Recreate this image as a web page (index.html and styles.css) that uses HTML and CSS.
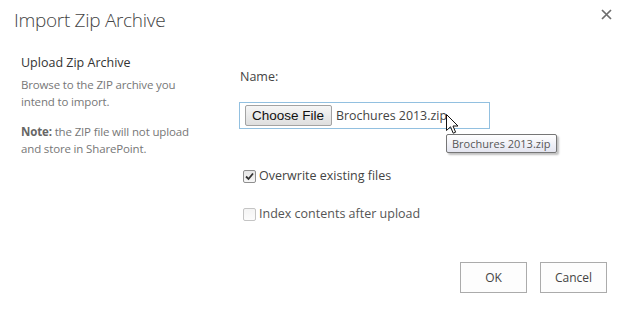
FILE: index.html
```html
<!DOCTYPE html>
<html>
<head>
<meta charset="utf-8">
<link rel="stylesheet" href="styles.css">
</head>
<body>
<div class="dialog">
  <header class="dlg-head">
    <h1 class="dlg-title">Import Zip Archive</h1>
    <button class="close" aria-label="Close">
      <svg width="11" height="11" viewBox="0 0 11 11"><path d="M1 1 L10 10 M10 1 L1 10" stroke="#6d6d6d" stroke-width="1.7" fill="none"/></svg>
    </button>
  </header>
  <div class="dlg-body">
    <section class="desc">
      <h2 class="desc-title">Upload Zip Archive</h2>
      <p class="desc-text">Browse to the ZIP archive you<br>intend to import.</p>
      <p class="desc-text"><b>Note:</b> the ZIP file will not upload<br>and store in SharePoint.</p>
    </section>
    <section class="form">
      <div class="field-label">Name:</div>
      <div class="file-box">
        <span class="file-btn">Choose File</span>
        <span class="file-name">Brochures 2013.zip</span>
        <svg class="cursor" width="13" height="21" viewBox="0 0 13 21"><path d="M0.5 0.5 L0.5 16.5 L4.5 12.8 L7.2 19.2 L9.6 18.2 L7 12 L12 12 Z" fill="#fff" stroke="#111" stroke-width="1" stroke-linejoin="miter"/></svg>
        <span class="tooltip">Brochures 2013.zip</span>
      </div>
      <label class="check">
        <span class="cb on"><svg width="9" height="9" viewBox="0 0 9 9"><path d="M1 4.5 L3.5 7 L8 1.5" stroke="#333" stroke-width="1.8" fill="none"/></svg></span>
        <span>Overwrite existing files</span>
      </label>
      <label class="check disabled">
        <span class="cb"></span>
        <span>Index contents after upload</span>
      </label>
    </section>
  </div>
  <footer class="actions">
    <button class="btn">OK</button>
    <button class="btn">Cancel</button>
  </footer>
</div>
</body>
</html>
```
FILE: styles.css
```css
* { box-sizing: border-box; }
html, body { margin: 0; padding: 0; background: #fff; }
body {
  font-family: "Open Sans", "Noto Sans", sans-serif;
  color: #444;
  width: 622px;
  height: 320px;
  overflow: hidden;
}
.dialog { width: 622px; height: 320px; display: flex; flex-direction: column; }
.dlg-head {
  display: flex;
  justify-content: space-between;
  align-items: flex-start;
  padding: 6px 10px 0 14px;
}
.dlg-title {
  margin: 0;
  font-size: 19px;
  font-weight: 300;
  line-height: 28px;
  color: #444;
  letter-spacing: -0.3px;
}
.close {
  border: 0;
  background: none;
  padding: 0;
  margin-top: 3px;
  width: 11px;
  height: 11px;
  display: block;
}
.close svg { display: block; }
.dlg-body { display: flex; margin-top: 20px; }
.desc { width: 239px; padding-left: 21px; }
.desc-title {
  margin: 0;
  font-size: 12.5px;
  font-weight: 400;
  line-height: 18px;
  color: #333;
}
.desc-text {
  margin: 4px 0 0;
  font-size: 11.5px;
  line-height: 17px;
  color: #777;
  letter-spacing: -0.15px;
}
.desc-text + .desc-text { margin-top: 13px; }
.desc-text b { color: #666; font-weight: 700; }
.form { padding-top: 14px; }
.field-label { font-size: 12.5px; line-height: 18px; color: #444; padding-left: 1px; }
.file-box {
  position: relative;
  margin-top: 16px;
  width: 251px;
  height: 27px;
  border: 1px solid #92c0e0;
  display: flex;
  align-items: center;
  padding-left: 5px;
}
.file-btn {
  font-family: "Liberation Sans", Arial, sans-serif;
  font-size: 13.5px;
  color: #111;
  height: 21px;
  line-height: 19px;
  padding: 0 7px 0 6px;
  border: 1px solid #a3a3a3;
  border-radius: 2px;
  background: linear-gradient(#f6f6f6, #dedede);
}
.file-name { font-size: 12.4px; color: #444; margin-left: 4px; }
.cursor { position: absolute; left: 206px; top: 11px; }
.tooltip {
  position: absolute;
  left: 206px;
  top: 31px;
  width: 111px;
  height: 19px;
  border: 1px solid #767676;
  border-radius: 2px;
  background: linear-gradient(#fff, #e4e5f0);
  box-shadow: 2px 2px 2px rgba(0,0,0,0.25);
  font-size: 11px;
  line-height: 17px;
  color: #575757;
  padding-left: 5px;
  white-space: nowrap;
}
.check {
  display: flex;
  align-items: center;
  gap: 3px;
  font-size: 12.5px;
  line-height: 18px;
  color: #444;
  padding-left: 4px;
}
.file-box + .check { margin-top: 38px; }
.check + .check { margin-top: 20px; }
.check.disabled { color: #555; }
.cb {
  width: 13px;
  height: 13px;
  border: 1px solid #8f8f8f;
  border-radius: 2px;
  background: linear-gradient(#e6e6e6, #f7f7f7);
  display: flex;
  align-items: center;
  justify-content: center;
}
.cb svg { display: block; }
.disabled .cb { border-color: #c4c4c4; background: linear-gradient(#f4f4f4, #fcfcfc); }
.actions {
  display: flex;
  justify-content: flex-end;
  gap: 13px;
  padding-right: 15px;
  margin-top: 39px;
}
.btn {
  width: 67px;
  height: 31px;
  border: 1px solid #ababab;
  background: #fdfdfd;
  font-family: "Open Sans", "Noto Sans", sans-serif;
  font-size: 12px;
  color: #444;
  padding: 0;
}
```
